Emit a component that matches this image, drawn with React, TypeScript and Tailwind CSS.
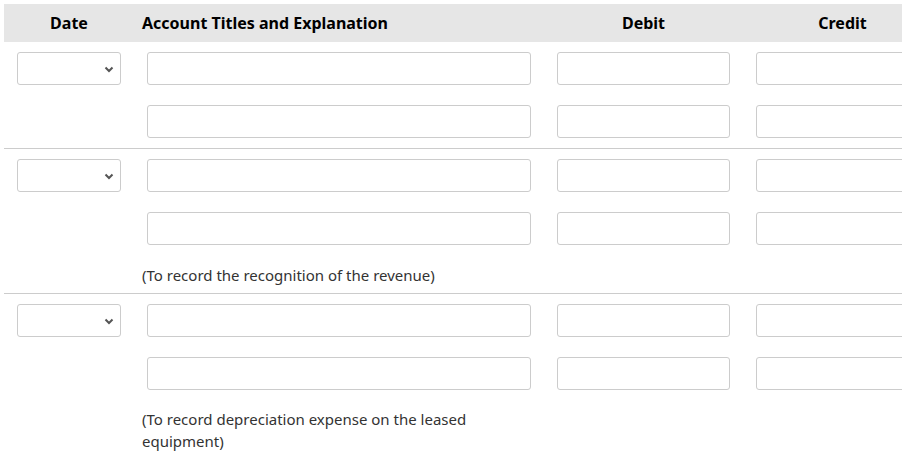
const font = { fontFamily: '"Noto Sans", "Open Sans", sans-serif' };

function DateSelect() {
  return (
    <div className="relative w-[104px] h-[33px] border border-[#cccccc] rounded-[3px] bg-white">
      <svg className="absolute left-[86px] top-[13px]" width="10" height="7" viewBox="0 0 10 7">
        <path d="M1.5 1.5 L5 5 L8.5 1.5" fill="none" stroke="#555555" strokeWidth="2" />
      </svg>
    </div>
  );
}

function EntryRow({ withDate }: { withDate: boolean }) {
  return (
    <div className="flex gap-[26px]">
      <div className="w-[104px] shrink-0">{withDate && <DateSelect />}</div>
      <div className="w-[384px] h-[33px] border border-[#cccccc] rounded-[3px] bg-white shrink-0" />
      <div className="w-[173px] h-[33px] border border-[#cccccc] rounded-[3px] bg-white shrink-0" />
      <div className="w-[173px] h-[33px] border border-[#cccccc] rounded-[3px] bg-white shrink-0" />
    </div>
  );
}

function Group({ note }: { note?: string }) {
  return (
    <div className="border-b border-[#cccccc] pl-[13px] pt-[10px] pb-[10px]">
      <div className="flex flex-col gap-[20px]">
        <EntryRow withDate />
        <EntryRow withDate={false} />
      </div>
      {note && (
        <div className="ml-[125px] mt-[19px] -mb-[3px] w-[384px] text-[15px] leading-[22px] text-[#333333]">
          {note}
        </div>
      )}
    </div>
  );
}

export default function App() {
  return (
    <div className="bg-white w-[910px] h-[474px] pt-[4px] pl-[4px]" style={font}>
      <div className="w-[898px] overflow-hidden">
        <div className="flex items-center h-[38px] bg-[#e6e6e6] text-[16px] font-bold text-black pl-[13px] gap-[26px]">
          <div className="w-[104px] text-center shrink-0">Date</div>
          <div className="w-[384px] shrink-0 -ml-[5px]">Account Titles and Explanation</div>
          <div className="w-[173px] text-center shrink-0 ml-[5px]">Debit</div>
          <div className="w-[173px] text-center shrink-0">Credit</div>
        </div>
        <Group />
        <Group note="(To record the recognition of the revenue)" />
        <div className="pl-[13px] pt-[10px]">
          <div className="flex flex-col gap-[20px]">
            <EntryRow withDate />
            <EntryRow withDate={false} />
          </div>
          <div className="ml-[125px] mt-[18px] w-[384px] text-[15px] leading-[22px] text-[#333333]">
            (To record depreciation expense on the leased equipment)
          </div>
        </div>
      </div>
    </div>
  );
}
